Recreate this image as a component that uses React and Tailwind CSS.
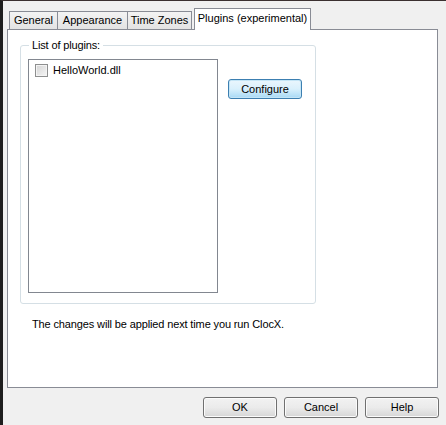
import React from "react";

const tabBase =
  "h-[18px] -ml-px border border-b-0 border-[#898c95] bg-gradient-to-b from-[#f3f3f3] to-[#e3e3e3] flex items-center justify-center text-black";

const buttonClass =
  "w-[74px] h-[21px] rounded-[3px] border border-[#707070] bg-gradient-to-b from-[#f2f2f2] via-[#ebebeb] to-[#d6d6d6] flex items-center justify-center text-black shadow-[inset_0_0_0_1px_#fbfbfb]";

export default function App() {
  return (
    <div
      className="w-[446px] h-[425px] bg-[#f0f0f0] border-l-[3px] border-l-[#1e1e1e] border-t border-t-[#3b3030] flex flex-col text-[11px] leading-[13px] text-black"
      style={{ fontFamily: '"Liberation Sans", Arial, sans-serif' }}
    >
      {/* tab strip */}
      <div className="ml-[4px] mt-[7px] h-[21px] flex items-end pl-[3px]">
        <div className={`${tabBase} w-[49px]`}>General</div>
        <div className={`${tabBase} w-[71px]`}>Appearance</div>
        <div className={`${tabBase} w-[65px]`}>Time Zones</div>
        <div className="relative z-10 ml-[2px] -mb-px h-[22px] w-[117px] border border-b-0 border-[#898c95] bg-white flex items-start justify-center pt-[3px]">
          Plugins (experimental)
        </div>
      </div>

      {/* page */}
      <div className="ml-[4px] w-[431px] h-[359px] border border-[#898c95] bg-white flex flex-col">
        <div className="relative ml-[12px] mt-[15px] w-[296px] h-[259px] border border-[#d5dfe5] rounded-[3px] flex items-start">
          <span className="absolute -top-[7px] left-[8px] bg-white px-[3px] tracking-[-0.15px]">
            List of plugins:
          </span>
          <div className="ml-[7px] mt-[13px] w-[190px] h-[234px] border border-[#828790] bg-white">
            <div className="flex items-center gap-[5px] ml-[6px] mt-[4px]">
              <span className="w-[13px] h-[13px] border border-[#8e8f8f] bg-gradient-to-br from-[#d4d4d4] to-[#f6f6f6] shadow-[inset_0_0_0_1px_#f4f4f4]" />
              <span>HelloWorld.dll</span>
            </div>
          </div>
          <button className="ml-[10px] mt-[33px] w-[74px] h-[20px] rounded-[3px] border border-[#3c7fb1] bg-gradient-to-b from-[#eaf6fd] via-[#d9f0fc] to-[#a7d9f5] shadow-[inset_0_0_0_1px_#c4e5f6] flex items-center justify-center text-black">
            Configure
          </button>
        </div>
        <p className="ml-[24px] mt-[14px] tracking-[-0.13px]">
          The changes will be applied next time you run ClocX.
        </p>
      </div>

      {/* dialog buttons */}
      <div className="mt-[9px] flex justify-end gap-[7px] pr-[7px]">
        <button className={buttonClass}>OK</button>
        <button className={buttonClass}>Cancel</button>
        <button className={buttonClass}>Help</button>
      </div>
    </div>
  );
}
